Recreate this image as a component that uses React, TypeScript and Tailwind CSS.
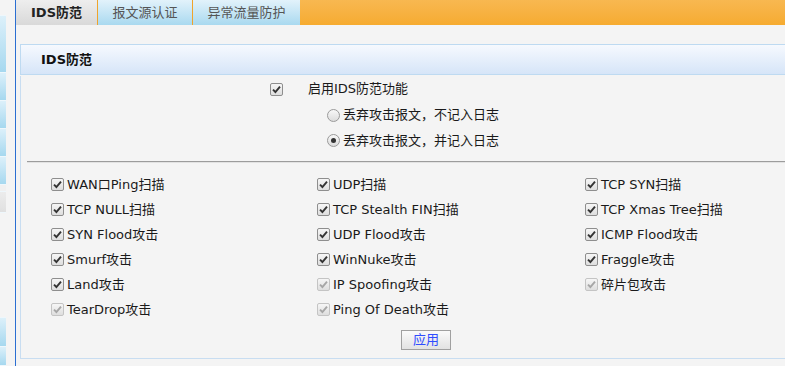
import React from "react";

type Item = { label: string; disabled?: boolean };

const items: Item[] = [
  { label: "WAN口Ping扫描" },
  { label: "UDP扫描" },
  { label: "TCP SYN扫描" },
  { label: "TCP NULL扫描" },
  { label: "TCP Stealth FIN扫描" },
  { label: "TCP Xmas Tree扫描" },
  { label: "SYN Flood攻击" },
  { label: "UDP Flood攻击" },
  { label: "ICMP Flood攻击" },
  { label: "Smurf攻击" },
  { label: "WinNuke攻击" },
  { label: "Fraggle攻击" },
  { label: "Land攻击" },
  { label: "IP Spoofing攻击", disabled: true },
  { label: "碎片包攻击", disabled: true },
  { label: "TearDrop攻击", disabled: true },
  { label: "Ping Of Death攻击", disabled: true },
];

const font = { fontFamily: '"DejaVu Sans", Verdana, "Noto Sans CJK SC", sans-serif' };

const CheckBox = ({ disabled }: { disabled?: boolean }) => (
  <span
    className={`inline-flex h-[13px] w-[13px] shrink-0 items-center justify-center rounded-[2px] border bg-gradient-to-b from-[#f6f6f6] to-[#dedede] ${
      disabled ? "border-[#c4c4c4]" : "border-[#8e8e8e]"
    }`}
  >
    <svg width="9" height="9" viewBox="0 0 9 9">
      <path
        d="M1 4.6 L3.4 7 L8 1.6"
        fill="none"
        stroke={disabled ? "#a6a6a6" : "#333"}
        strokeWidth="1.9"
      />
    </svg>
  </span>
);

const Radio = ({ checked }: { checked?: boolean }) => (
  <span className="inline-flex h-[13px] w-[13px] shrink-0 items-center justify-center rounded-full border border-[#9a9a9a] bg-gradient-to-b from-[#f8f8f8] to-[#dcdcdc]">
    {checked && <span className="h-[5px] w-[5px] rounded-full bg-[#333]" />}
  </span>
);

const sideTiles = [
  { h: 16, c: "bg-[#f4f4f4]" },
  { h: 57, c: "bg-gradient-to-b from-[#dcf0fa] to-[#a6d8ef]" },
  { h: 28, c: "bg-gradient-to-b from-[#dcf0fa] to-[#a6d8ef]" },
  { h: 28, c: "bg-gradient-to-b from-[#dcf0fa] to-[#a6d8ef]" },
  { h: 28, c: "bg-gradient-to-b from-[#dcf0fa] to-[#a6d8ef]" },
  { h: 28, c: "bg-gradient-to-b from-[#dcf0fa] to-[#a6d8ef]" },
  { h: 7, c: "bg-[#f0f0f0]" },
  { h: 21, c: "bg-gradient-to-b from-[#ececec] to-[#e0e0e0]" },
  { h: 105, c: "bg-[#f4f4f4]" },
  { h: 29, c: "bg-gradient-to-b from-[#dcf0fa] to-[#a6d8ef]" },
  { h: 19, c: "bg-gradient-to-b from-[#dcf0fa] to-[#a6d8ef]" },
];

export default function App() {
  return (
    <div className="flex h-[366px] w-[785px] overflow-hidden bg-[#f4f4f4] text-[13px] text-[#1a1a1a]" style={font}>
      {/* left frame strip */}
      <div className="flex w-[15px] shrink-0">
        <div className="flex w-[6px] flex-col">
          {sideTiles.map((t, i) => (
            <div key={i} className={`${t.c} border-b border-[#eef7fc]`} style={{ height: t.h }} />
          ))}
        </div>
        <div className="flex-1 bg-[#f4f4f4]" />
      </div>
      <div className="w-px shrink-0 bg-[#2b6fd2]" />

      <div className="flex min-w-0 flex-1 flex-col">
        {/* tabs */}
        <div className="flex h-[25px] text-[13px]">
          <div className="flex w-[81px] items-center justify-center bg-gradient-to-b from-[#eeeeee] to-[#d9d9d9] font-bold text-[#222]">
            IDS防范
          </div>
          <div className="w-px bg-[#f0a42c]" />
          <div className="flex w-[94px] items-center justify-center bg-gradient-to-b from-[#e2f2fb] to-[#a9d9ef] text-[#555]">
            报文源认证
          </div>
          <div className="w-px bg-[#f0a42c]" />
          <div className="flex w-[107px] items-center justify-center bg-gradient-to-b from-[#e2f2fb] to-[#a9d9ef] text-[#555]">
            异常流量防护
          </div>
          <div className="flex-1 bg-gradient-to-b from-[#f8b850] to-[#f6ab30]" />
        </div>

        {/* section box */}
        <div className="ml-[4px] mt-[19px] w-[800px]">
          <div className="flex h-[31px] items-center border-y border-l border-[#bedaf1] bg-gradient-to-b from-[#f6f9fe] to-[#d6e5f8] pl-[20px] text-[13px] font-bold text-[#111]">
            IDS防范
          </div>
          <div className="border-b border-l border-[#c8ddf1] pb-[8px]">
            <div className="mt-[1px] flex h-[26px] items-center pl-[249px]">
              <CheckBox />
              <span className="ml-[25px]">启用IDS防范功能</span>
            </div>
            <div className="flex h-[26px] items-center pl-[306px]">
              <Radio />
              <span className="ml-[3px]">丢弃攻击报文，不记入日志</span>
            </div>
            <div className="flex h-[25px] items-center pl-[306px]">
              <Radio checked />
              <span className="ml-[3px]">丢弃攻击报文，并记入日志</span>
            </div>

            <div className="ml-[6px] mt-[8px] h-[2px] border-t border-[#9c9c9c] bg-[#e2e2e2]" />

            <div className="mt-[9px] grid grid-cols-[266px_268px_1fr] pl-[30px]">
              {items.map((it) => (
                <div key={it.label} className="flex h-[25px] items-center">
                  <CheckBox disabled={it.disabled} />
                  <span className="ml-[3px]">{it.label}</span>
                </div>
              ))}
            </div>

            <div className="mt-[8px] flex pl-[380px]">
              <button className="flex h-[20px] w-[50px] items-center justify-center border border-[#a0a0a0] bg-gradient-to-b from-[#fafafa] to-[#e2e2e2] text-[13px] text-[#2f4dff]">
                应用
              </button>
            </div>
          </div>
        </div>
      </div>
    </div>
  );
}
